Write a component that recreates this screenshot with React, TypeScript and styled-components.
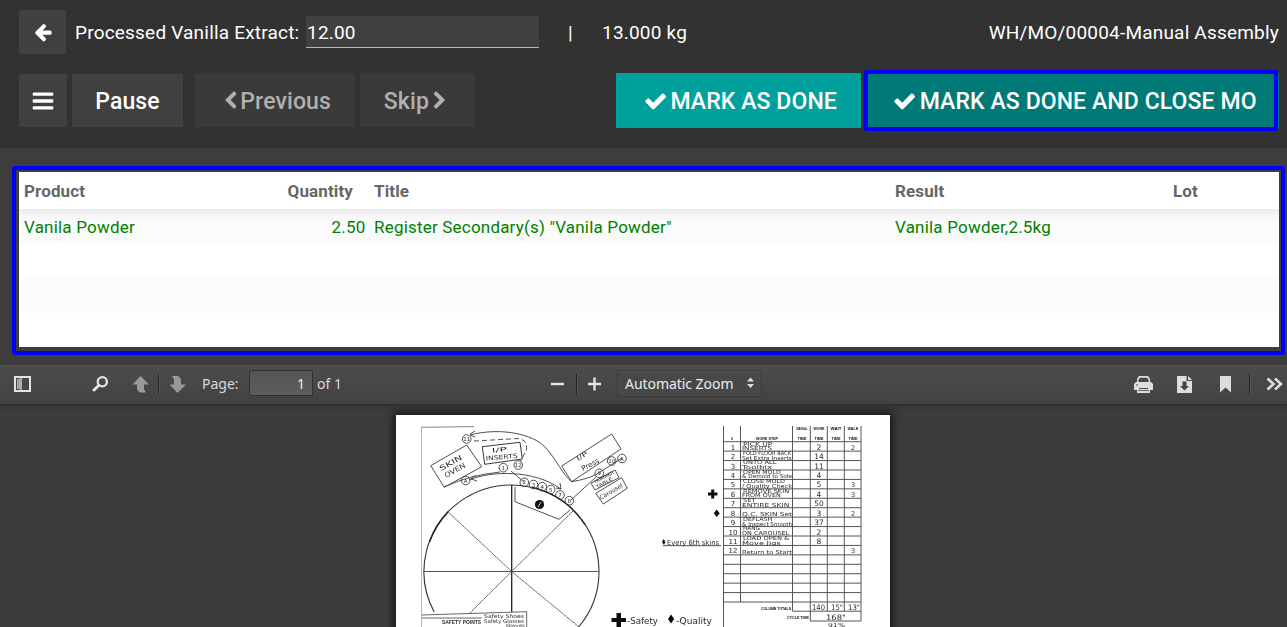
import React from 'react';
import styled, { createGlobalStyle } from 'styled-components';

const GlobalStyle = createGlobalStyle`
  *, *::before, *::after { box-sizing: border-box; }
  body { margin: 0; background: #3d3d3d; font-family: Roboto, "Liberation Sans", sans-serif; overflow: hidden; }
`;

const Screen = styled.main`
  height: 627px;
  display: flex;
  flex-direction: column;
  overflow: hidden;
  background: #3d3d3d;
`;

const Header = styled.header`
  height: 149px;
  flex: none;
  padding: 10px 8px 0 19px;
  background: #323232;
  border-bottom: 1px solid #393939;
`;

const InfoRow = styled.div`
  display: flex;
  align-items: center;
  height: 44px;
  color: #fff;
  font-size: 19px;
  line-height: 44px;
  white-space: pre;
`;

const Label = styled.span<{ $w: number; $gap?: number; $ls?: number }>`
  width: ${p => p.$w}px;
  padding-top: 2px;
  margin-left: ${p => p.$gap ?? 0}px;
  letter-spacing: ${p => p.$ls ?? 0}px;
`;

const OrderName = styled.span`
  margin-left: auto;
  padding-top: 2px;
  letter-spacing: 0.2px;
`;

const QuantityInput = styled.input`
  width: 233px;
  height: 32px;
  padding: 2px 2px 0 1px;
  border: 0;
  border-bottom: 1px solid #b5b5b5;
  border-radius: 0;
  outline: 0;
  background: #404040;
  color: #fff;
  font: 19px Roboto, sans-serif;
  letter-spacing: 0.2px;
`;

const ActionRow = styled.div`
  display: flex;
  align-items: center;
  height: 55px;
  margin-top: 19px;
`;

const Button = styled.button<{ $w: number; $h?: number; $gap?: number; $bg?: string; $dim?: boolean; $nudge?: number }>`
  position: relative;
  flex: none;
  display: flex;
  align-items: center;
  justify-content: center;
  width: ${p => p.$w}px;
  height: ${p => p.$h ?? 53}px;
  margin-left: ${p => p.$gap ?? 0}px;
  padding: 0 ${p => Math.max(0, -(p.$nudge ?? 0))}px 0 ${p => Math.max(0, p.$nudge ?? 0)}px;
  border: 0;
  background: ${p => p.$bg ?? '#404040'};
  color: ${p => (p.$dim ? '#b0b0b0' : '#fff')};
  font: 500 23px/30px Roboto, sans-serif;
  white-space: nowrap;
`;

const PrimaryGroup = styled.div`
  display: flex;
  margin-left: auto;
`;

const ButtonText = styled.span<{ $before?: number; $after?: number }>`
  padding-top: 2px;
  margin: 0 ${p => p.$after ?? 0}px 0 ${p => p.$before ?? 0}px;
  letter-spacing: 0.1px;
`;

const ButtonHighlight = styled.span`
  position: absolute;
  inset: -3px 1px -3px -4px;
  border: 4px solid #0000fe;
  border-radius: 3px;
`;

const TableFrame = styled.section`
  flex: none;
  width: 1273px;
  height: 189px;
  margin: 17px 0 0 12px;
  padding: 2px 2px 4px 3px;
  border: 4px solid #0000fe;
  border-radius: 3px;
`;

const Table = styled.div`
  height: 175px;
  width: 1260px;
  background: #fff;
`;

const TableRow = styled.div<{ $head?: boolean; $stripe?: boolean; $shade?: boolean }>`
  display: grid;
  grid-template-columns: 240px 110px 521px 278px 1fr;
  align-items: center;
  height: ${p => (p.$head ? 37 : 34.5)}px;
  color: ${p => (p.$head ? '#666' : '#008000')};
  font-size: 17px;
  font-weight: ${p => (p.$head ? 700 : 400)};
  letter-spacing: ${p => (p.$head ? 0.12 : 0.2)}px;
  background: ${p => (p.$shade ? 'linear-gradient(#ebebeb, #f8f8f8 8px, #fbfbfb 14px)' : p.$stripe ? '#fbfbfb' : '#fff')};
`;

const Cell = styled.div<{ $right?: number }>`
  padding: 1px ${p => p.$right ?? 5}px 0 5px;
  text-align: ${p => (p.$right ? 'right' : 'left')};
  white-space: nowrap;
`;

const PdfBar = styled.nav`
  flex: none;
  display: flex;
  align-items: center;
  height: 40px;
  margin-top: 10px;
  padding: 0 4px 2px 14px;
  border-top: 1px solid #505050;
  border-bottom: 1px solid #2d2d2d;
  background: linear-gradient(#4c4c4c, #424242);
  color: #dadada;
  font: 14px "Noto Sans", "Open Sans", sans-serif;
`;

const BarIcon = styled.svg<{ $w: number; $gap?: number }>`
  flex: none;
  display: block;
  width: ${p => p.$w}px;
  height: 18px;
  margin-left: ${p => p.$gap ?? 0}px;
  overflow: visible;
`;

const Separator = styled.i<{ $gap: number }>`
  flex: none;
  width: 2px;
  height: 20px;
  margin-left: ${p => p.$gap}px;
  background: #252525;
  border-right: 1px solid #555;
`;

const BarText = styled.span<{ $w: number; $gap: number }>`
  flex: none;
  width: ${p => p.$w}px;
  padding-bottom: 2px;
  margin-left: ${p => p.$gap}px;
  white-space: nowrap;
`;

const PageInput = styled.input`
  width: 64px;
  height: 26px;
  margin: 0 0 2px 10px;
  padding: 0 7px;
  border: 1px solid #303030;
  border-radius: 2px;
  background: linear-gradient(#555, #5d5d5d);
  color: #f0f0f0;
  font: 14px "Noto Sans", sans-serif;
  text-align: right;
`;

const ZoomSelect = styled.div`
  display: flex;
  align-items: center;
  width: 145px;
  height: 27px;
  margin: 0 0 2px 16px;
  padding: 0 7px 0 7px;
  border: 1px solid #3b3b3b;
  border-radius: 2px;
  background: #484848;
  box-shadow: inset 0 1px 0 #555;
  color: #ececec;
  letter-spacing: -0.05px;
  justify-content: space-between;
  white-space: nowrap;
`;

const BarRight = styled.div`
  display: flex;
  align-items: center;
  margin-left: auto;
`;

const Viewer = styled.section`
  flex: 1;
  min-height: 0;
  padding: 10px 0 0 396px;
  overflow: hidden;
  background: linear-gradient(#353535, #3c3c3c 8px);
`;

const Page = styled.div`
  width: 494px;
  height: 240px;
  background: #fff;
  box-shadow: 0 0 9px 2px rgba(0, 0, 0, 0.75);
`;

const Scan = styled.svg`
  display: block;
  filter: blur(0.35px);
`;

const glyphs = {
  arrow: 'M1664 896v128q0 53-32.5 90.5t-84.5 37.5h-704l293 294q38 36 38 90t-38 90l-75 76q-37 37-90 37-52 0-91-37l-651-652q-37-37-37-90 0-52 37-91l651-650q38-38 91-38 52 0 90 38l75 74q38 38 38 91t-38 91l-293 293h704q52 0 84.5 37.5t32.5 90.5z',
  bars: 'M1664 1344v128q0 26-19 45t-45 19h-1408q-26 0-45-19t-19-45v-128q0-26 19-45t45-19h1408q26 0 45 19t19 45zm0-512v128q0 26-19 45t-45 19h-1408q-26 0-45-19t-19-45v-128q0-26 19-45t45-19h1408q26 0 45 19t19 45zm0-512v128q0 26-19 45t-45 19h-1408q-26 0-45-19t-19-45v-128q0-26 19-45t45-19h1408q26 0 45 19t19 45z',
  check: 'M1671 566q0 40-28 68l-724 724-136 136q-28 28-68 28t-68-28l-136-136-362-362q-28-28-28-68t28-68l136-136q28-28 68-28t68 28l294 295 656-657q28-28 68-28t68 28l136 136q28 28 28 68z',
  left: 'M1427 301l-531 531 531 531q19 19 19 45t-19 45l-166 166q-19 19-45 19t-45-19l-742-742q-19-19-19-45t19-45l742-742q19-19 45-19t45 19l166 166q19 19 19 45t-19 45z',
  right: 'M1363 877l-742 742q-19 19-45 19t-45-19l-166-166q-19-19-19-45t19-45l531-531-531-531q-19-19-19-45t19-45l166-166q19-19 45-19t45 19l742 742q19 19 19 45t-19 45z',
};

const Glyph = ({ name, size = 24, crop = 0 }: { name: keyof typeof glyphs; size?: number; crop?: number }) => (
  <svg
    width={size * (1 - (2 * crop) / 1792)}
    height={size}
    viewBox={`${crop} 0 ${1792 - 2 * crop} 1792`}
    fill="currentColor"
  >
    <path d={glyphs[name]} />
  </svg>
);

const steps: [string, string, string, string][] = [
  ['PICK UP', 'INSERTS', '2', '2'],
  ['FOLD FLOOR BACK', 'Set Extra Inserts', '14', ''],
  ['UNTO ALL', 'Toolbix', '11', ''],
  ['OPEN MOLD', '& Demold to Side', '4', ''],
  ['CLOSE MOLD', '/ Quality Check', '5', '3'],
  ['REMOVE SKIN', 'FROM OVEN', '4', '3'],
  ['SET', 'ENTIRE SKIN', '50', ''],
  ['', 'Q.C. SKIN Set', '3', '2'],
  ['DEFLASH', '& Inspect Smooth', '37', ''],
  ['HANG', 'ON CAROUSEL', '2', ''],
  ['LOAD OPEN &', 'Move Jigs', '8', ''],
  ['', 'Return to Start', '', '3'],
];

const rowY = (i: number) => 441.7 + i * 9.43;

const stations: [number, number, string][] = [
  [466.7, 439, '11'], [503.3, 467.7, '1'], [518.3, 465, '12'], [465.7, 480.5, 'A'],
  [524.3, 482.3, '2'], [533.5, 484.5, '3'], [542.3, 486.7, '4'], [550.7, 489.5, '5'],
  [560, 495, '7'], [569.3, 500.7, '8'], [599.3, 473.3, '9'], [611.7, 461, '10'], [622, 458.5, 'A'],
];

const Fit = (props: React.SVGProps<SVGTextElement>) => <text lengthAdjust="spacingAndGlyphs" {...props} />;

const Worksheet = () => (
  <Scan width="494" height="212" viewBox="396 415 494 212" fontFamily="'DejaVu Sans', sans-serif" fill="#2a2a2a">
    <g fill="none" stroke="#3c3c3c" strokeWidth="0.9">
      <path d="M421 427.3L474 426.6" stroke="#777" />
      <path d="M421.5 427V627" stroke="#999" strokeWidth="0.7" />
      <path d="M434.2 612A87.5 86.5 0 1 1 578.6 627" stroke="#333" strokeWidth="1.1" />
      <path d="M532 487.4A87.5 86.5 0 0 1 585 524.5M429.5 542A87.5 86.5 0 0 1 448 512" stroke="#222" strokeWidth="1.4" />
      <path d="M511.7 485V612" stroke="#222" strokeWidth="1.3" />
      <path d="M423.5 571.5H598.5" stroke="#555" strokeWidth="1.1" />
      <path d="M447 511L511.7 571.5L579 627M573 511L511.7 571.5L469 614" stroke="#555" strokeDasharray="3 .4" />
      <path d="M430.7 465.7L466.7 445L481.7 466.7L444.3 487.3Z" />
      <path d="M482.3 446.7L520 442.3L522.3 459L484.7 464.3Z" stroke="#222" />
      <path d="M470 435C500 427 533 434 545 447S562 474 571.7 481.7Q588 479 597 474L622 458" />
      <path d="M474 441L519 438.5Q529 441 526 451L520 462" strokeDasharray="5 3" />
      <path d="M469 480C490 471 533 469 561 489M444 487Q470 475 500 472" />
      <path d="M470 434l5-3M470 435l5 2M561 489l-1-6M561 489l-5-1M471 479l5-4M471 479l6 2" />
      <path d="M561.7 466L611.7 434L621 449L571.7 481.7Z" />
      <path d="M591 483.3L615 470L619 477.7L595 490Z" />
      <path d="M595.7 493.3L621.7 477.7L627.3 488.3L603.3 504Z" />
      <path d="M571 500L596 477M511 471L524 482" />
      <path d="M515 487V501.7L559 519.3L570 510" />
      <path d="M421.7 615L526.7 611.7V627M421.7 618H482" stroke="#555" />
      <path d="M663 545.7H721" />
      {stations.map(([x, y], i) => <circle key={i} cx={x} cy={y} r="4.3" />)}
    </g>
    {stations.map(([x, y, n], i) => <text key={i} x={x} y={y + 2} fontSize="5.5" textAnchor="middle">{n}</text>)}
    <circle cx="539.5" cy="504.5" r="4.6" fill="#111" />
    <path d="M538 507l3-5" stroke="#eee" strokeWidth=".8" />
    <g fontSize="7">
      <Fit transform="translate(441 471) rotate(-29)" textLength="25">SKIN</Fit>
      <Fit transform="translate(446 478) rotate(-29)" textLength="23">OVEN</Fit>
      <Fit transform="translate(492 452.5) rotate(-5)" textLength="15" fontSize="6">I/P</Fit>
      <Fit transform="translate(486 460.5) rotate(-5)" textLength="32" fontSize="6">INSERTS</Fit>
      <Fit transform="translate(578 461) rotate(-32)" textLength="12" fontSize="6">I/P</Fit>
      <Fit transform="translate(583 471) rotate(-28)" textLength="19">Press</Fit>
      <Fit transform="translate(595 484) rotate(-29)" textLength="22" fontSize="4.5">TRIMMER</Fit>
      <Fit transform="translate(597 488.5) rotate(-29)" textLength="18" fontSize="4.5">TABLE</Fit>
      <Fit transform="translate(601 500) rotate(-31)" textLength="26" fontSize="6">Carousel</Fit>
    </g>
    <Fit x="442" y="624" fontSize="5.5" fontWeight="700" fontFamily="'Liberation Sans'" textLength="39">SAFETY POINTS</Fit>
    <g fontSize="5.2">
      <Fit x="484" y="618" textLength="40">Safety Shoes</Fit>
      <Fit x="484" y="622.7" textLength="40">Safety Glasses</Fit>
      <Fit x="506" y="626.6" fontSize="4.3" textLength="19">Gloves</Fit>
    </g>
    <g fill="#0d0d0d">
      <path d="M616.5 613h4.5v5h5v4h-5v5h-4.5v-5h-5v-4h5z" />
      <path d="M711.2 489.5h3v3h3.2v3h-3.2v3h-3v-3H708v-3h3.2z" />
      <path d="M671 614.5l3.2 4.5l-3.2 4.5l-3-4.5zM716.7 509.5l3 3.7l-3 3.8l-3-3.8z" />
      <path d="M663.5 539l2 3l-1.5 3l-2-3z" />
    </g>
    <g fontSize="9">
      <Fit x="627" y="624" textLength="31">-Safety</Fit>
      <Fit x="676" y="623.5" textLength="36">-Quality</Fit>
      <Fit x="667" y="545" fontSize="7" textLength="52">Every 6th skins</Fit>
    </g>
    <g stroke="#555" strokeWidth="1">
      <path d="M723.5 426V627M740.5 426V602M792.5 426V611M810.3 426V621M827.3 426V611M844.3 426V611M861 426V621" />
      {Array.from({ length: 18 }, (_, i) => <path key={i} d={`M723.5 ${rowY(i)}H861`} />)}
      <path d="M792.5 611.2H861M810.3 621H861" />
    </g>
    <g fontSize="4" fontWeight="700" fontFamily="'Liberation Sans'" fill="#111" textAnchor="middle">
      <text x="732" y="439.5">#</text>
      <Fit x="767" y="439.7" textLength="22">WORK STEP</Fit>
      {['MANUAL', 'WORK', 'WAIT', 'WALK'].map((t, i) => (
        <React.Fragment key={t}>
          <Fit x={802 + i * 17} y="430" textLength="11">{t}</Fit>
          <Fit x={802 + i * 17} y="439.7" textLength="9">TIME</Fit>
        </React.Fragment>
      ))}
      <Fit x="776" y="609.5" textLength="30">COLUMN TOTALS</Fit>
      <Fit x="798" y="619" textLength="22">CYCLE TIME</Fit>
    </g>
    {steps.map(([a, b, work, walk], i) => (
      <g key={i} fontSize="5.4">
        <text x="733" y={rowY(i) + 8} fontSize="7" textAnchor="middle">{i + 1}</text>
        <Fit x="743" y={rowY(i) + 3.8} textLength={a ? Math.min(48, a.length * 4.2) : undefined}>{a}</Fit>
        <Fit x="742" y={rowY(i) + 8.5} textLength={Math.min(50, b.length * 4.3)}>{b}</Fit>
        <text x="819" y={rowY(i) + 8} fontSize="7.5" textAnchor="middle">{work}</text>
        <text x="853" y={rowY(i) + 8} fontSize="6.5" textAnchor="middle">{walk}</text>
      </g>
    ))}
    <g fontSize="7.5">
      <Fit x="812" y="610" textLength="13">140</Fit>
      <Fit x="831" y="610" textLength="12">15"</Fit>
      <Fit x="848" y="610" textLength="12">13"</Fit>
      <Fit x="826" y="620" textLength="20">168"</Fit>
      <Fit x="828" y="626.5" fontSize="5.5" textLength="17">91%</Fit>
    </g>
  </Scan>
);

export default function App() {
  return (
    <Screen>
      <GlobalStyle />
      <Header>
        <InfoRow>
          <Button $w={47} $h={44}><Glyph name="arrow" size={20} /></Button>
          <Label $w={231} $gap={9} $ls={0.2}>Processed Vanilla Extract:</Label>
          <QuantityInput defaultValue="12.00" />
          <Label $w={5} $gap={29}>|</Label>
          <Label $w={90} $gap={29} $ls={0.2}>13.000 kg</Label>
          <OrderName>WH/MO/00004-Manual Assembly</OrderName>
        </InfoRow>
        <ActionRow>
          <Button $w={48}><Glyph name="bars" /></Button>
          <Button $w={111} $gap={5}><ButtonText>Pause</ButtonText></Button>
          <Button $w={160} $gap={12} $bg="#3a3a3a" $dim $nudge={6}><Glyph name="left" size={19.5} crop={380} /><ButtonText $before={4}>Previous</ButtonText></Button>
          <Button $w={115} $gap={5} $bg="#3a3a3a" $dim $nudge={-6}><ButtonText $after={5}>Skip</ButtonText><Glyph name="right" size={19.5} crop={380} /></Button>
          <PrimaryGroup>
            <Button $w={245} $h={55} $bg="#00a09d" $nudge={5}><Glyph name="check" crop={100} /><ButtonText $before={4}>MARK AS DONE</ButtonText></Button>
            <Button $w={411} $h={55} $gap={7} $bg="#007a77" $nudge={4}><Glyph name="check" crop={100} /><ButtonText $before={4}>MARK AS DONE AND CLOSE MO</ButtonText><ButtonHighlight /></Button>
          </PrimaryGroup>
        </ActionRow>
      </Header>
      <TableFrame>
        <Table>
          <TableRow $head>
            <Cell>Product</Cell><Cell $right={16}>Quantity</Cell><Cell>Title</Cell><Cell>Result</Cell><Cell>Lot</Cell>
          </TableRow>
          <TableRow $shade>
            <Cell>Vanila Powder</Cell><Cell $right={3.5}>2.50</Cell><Cell>Register Secondary(s) "Vanila Powder"</Cell><Cell>Vanila Powder,2.5kg</Cell><Cell />
          </TableRow>
          <TableRow />
          <TableRow $stripe />
          <TableRow />
        </Table>
      </TableFrame>
      <PdfBar>
        <BarIcon $w={17} viewBox="0 0 17 18"><rect x="1" y="2" width="15" height="14" fill="none" stroke="#e4e4e4" strokeWidth="2" /><rect x="3" y="4" width="3" height="10" fill="#aaa" /><path d="M7 2v14" stroke="#e4e4e4" strokeWidth="1.3" /></BarIcon>
        <BarIcon $w={17} $gap={61} viewBox="0 0 17 18"><circle cx="10.3" cy="6.7" r="4.6" fill="none" stroke="#e4e4e4" strokeWidth="2.3" /><path d="M6.7 10.5L2 15" stroke="#e4e4e4" strokeWidth="3" strokeLinecap="round" /></BarIcon>
        <BarIcon $w={17} $gap={23} viewBox="0 0 17 18"><path d="M8.5 1L17 9.5H12V14l2 3.5H8.5Q5 16 5 13V9.5H.5z" fill="#999" /></BarIcon>
        <Separator $gap={9} />
        <BarIcon $w={17} $gap={9} viewBox="0 0 17 18"><path d="M8.5 18L17 9.5H12V6Q12 2 8.5 1H3l2 3.5V9.5H.5z" fill="#999" /></BarIcon>
        <BarText $w={37} $gap={16}>Page:</BarText>
        <PageInput defaultValue="1" />
        <BarText $w={30} $gap={4}>of 1</BarText>
        <BarIcon $w={13} $gap={204} viewBox="0 0 13 18"><path d="M0 9h13" stroke="#e4e4e4" strokeWidth="2.4" /></BarIcon>
        <Separator $gap={12} />
        <BarIcon $w={13} $gap={10} viewBox="0 0 13 18"><path d="M0 9h13M6.5 2.5v13" stroke="#e4e4e4" strokeWidth="2.4" /></BarIcon>
        <ZoomSelect>Automatic Zoom<BarIcon $w={7} viewBox="0 0 7 18"><path d="M0 7.5L3.5 3.5L7 7.5zM0 10H7L3.5 14z" fill="#ddd" /></BarIcon></ZoomSelect>
        <BarRight>
          <BarIcon $w={19} viewBox="0 0 19 18"><path d="M3 7V4l2-3h9l2 3v3h1l2 2v6h-3v3H3v-3H0V9l2-2z" fill="#ddd" /><path d="M4.5 7V4.5L6 2.7h7l1.5 1.8V7zM5 13h9v1H5z" fill="#484848" /><path d="M4 15.5h11" stroke="#484848" strokeWidth=".8" /><path d="M2 10h2" stroke="#555" /></BarIcon>
          <BarIcon $w={15} $gap={24} viewBox="0 0 15 18"><path d="M0 1h9.5v5H15v12H0zM11 1l4 4h-4z" fill="#ddd" /><path d="M5.5 6.5h4V11H12l-4.5 4.5L3 11h2.5z" fill="#444" /></BarIcon>
          <BarIcon $w={11} $gap={28} viewBox="0 0 11 18"><path d="M0 1h11v16.5L5.5 12.5L0 17.5z" fill="#ddd" /></BarIcon>
          <Separator $gap={18} />
          <BarIcon $w={17} $gap={15} viewBox="0 0 17 18"><path d="M1.5 3.5L7.5 9l-6 5.5M9 3.5L15 9l-6 5.5" fill="none" stroke="#ddd" strokeWidth="2.6" /></BarIcon>
        </BarRight>
      </PdfBar>
      <Viewer><Page><Worksheet /></Page></Viewer>
    </Screen>
  );
}
